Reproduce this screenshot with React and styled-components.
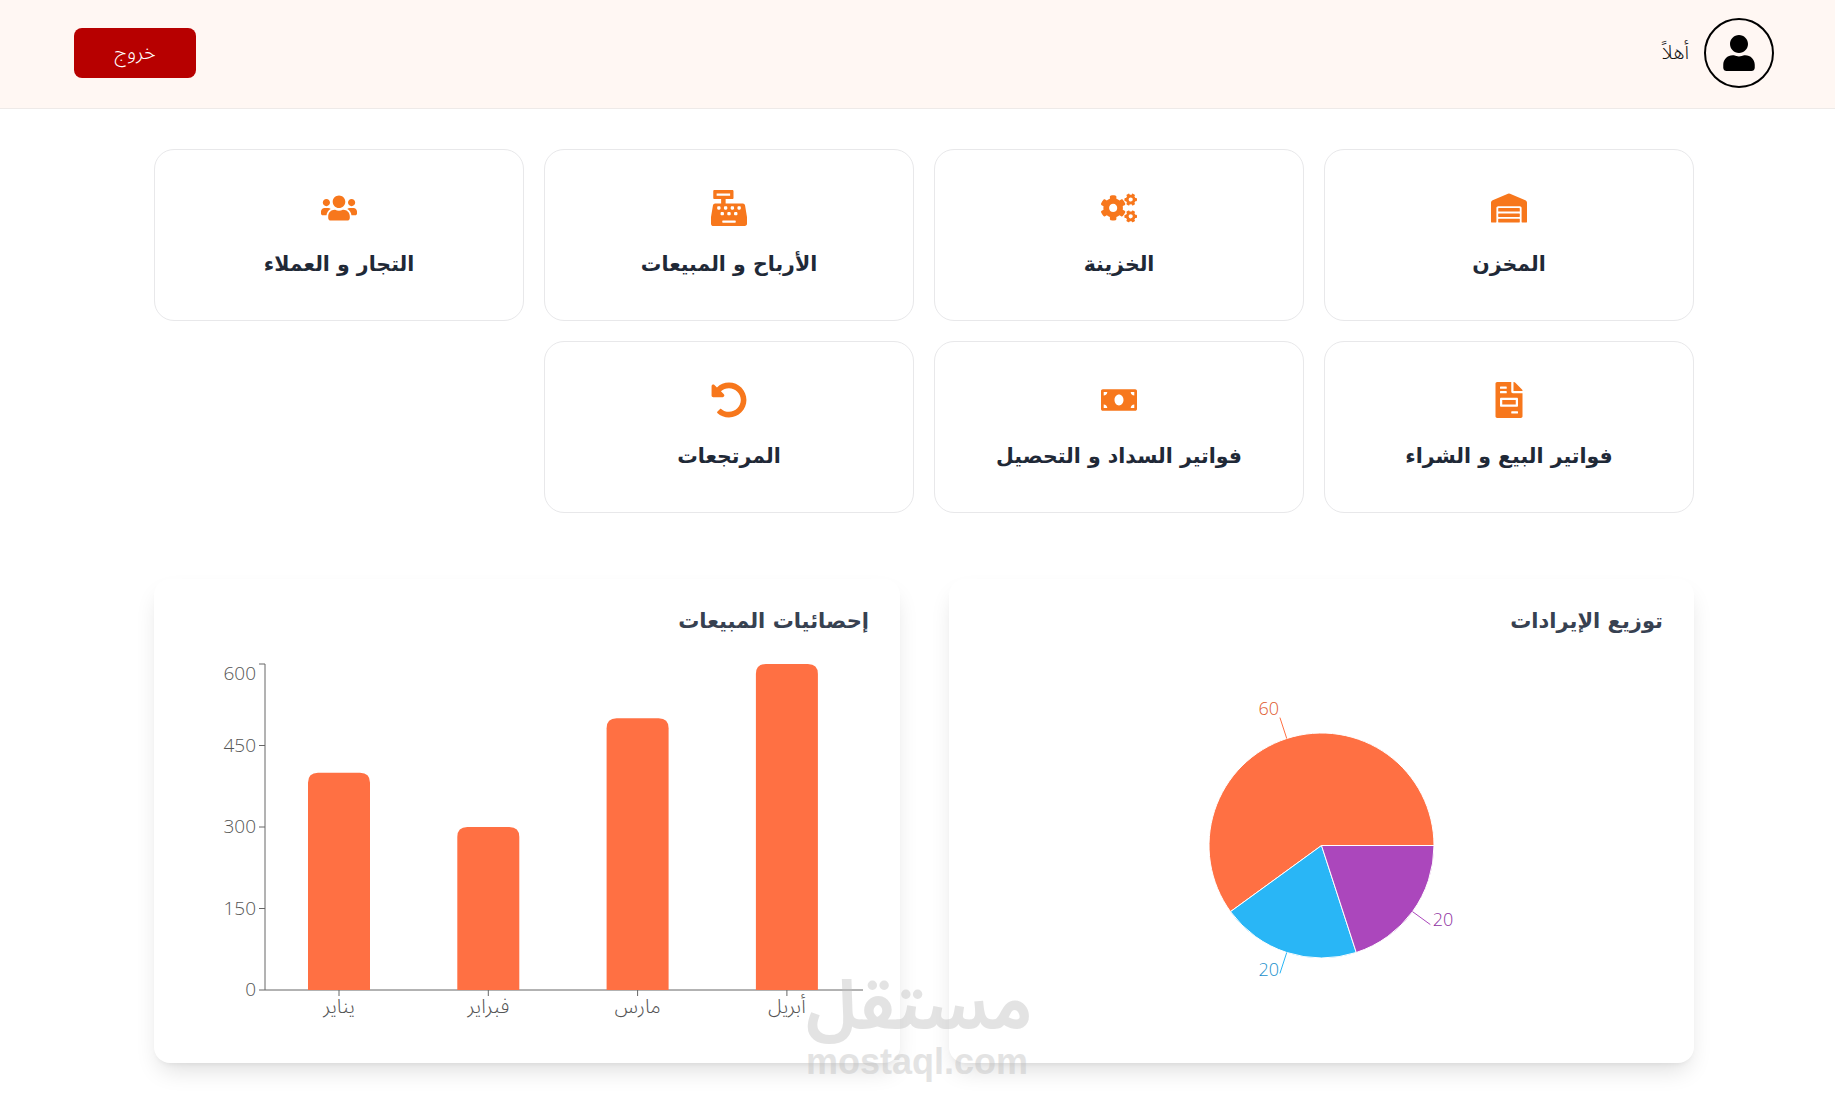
import React from "react";
import styled, { createGlobalStyle } from "styled-components";
import {
  FaWarehouse,
  FaCogs,
  FaCashRegister,
  FaUsers,
  FaFileInvoice,
  FaMoneyBill,
  FaUndoAlt,
  FaUser,
} from "react-icons/fa";

const arabicFont = `"Noto Sans Arabic", "Noto Sans", "DejaVu Sans", sans-serif`;
const headingFont = `"DejaVu Sans", sans-serif`;

const GlobalStyle = createGlobalStyle`
  html, body {
    margin: 0;
    padding: 0;
    background: #fff;
    font-family: ${arabicFont};
  }
  * { box-sizing: border-box; }
`;

const Page = styled.div`
  position: relative;
  direction: rtl;
  height: 1103px;
  overflow: hidden;
`;

const Header = styled.header`
  height: 109px;
  display: flex;
  align-items: center;
  justify-content: space-between;
  padding: 0 61px 2px 74px;
  background: #fff7f3;
  border-bottom: 1px solid #eeeae8;
`;

const UserBox = styled.div`
  display: flex;
  align-items: center;
  gap: 15px;
`;

const Avatar = styled.div`
  width: 70px;
  height: 70px;
  border: 2px solid #000;
  border-radius: 50%;
  display: flex;
  align-items: center;
  justify-content: center;
  font-size: 36px;
  color: #000;
`;

const Greeting = styled.span`
  font-size: 20px;
  font-weight: 300;
  color: #111;
`;

const LogoutButton = styled.button`
  width: 122px;
  height: 50px;
  border: 0;
  border-radius: 8px;
  background: #b70000;
  color: #fff;
  font-family: inherit;
  font-size: 20px;
  font-weight: 300;
`;

const Main = styled.main`
  padding: 40px 141px 0 154px;
`;

const CardGrid = styled.div`
  display: grid;
  grid-template-columns: repeat(4, 1fr);
  gap: 20px;
`;

const Card = styled.div`
  height: 172px;
  padding-top: 40px;
  display: flex;
  flex-direction: column;
  align-items: center;
  gap: 26px;
  border: 1px solid #e8e8ea;
  border-radius: 20px;
  background: #fff;
`;

const CardIcon = styled.div`
  font-size: 36px;
  line-height: 0;
  color: #f7771c;
`;

const CardLabel = styled.div`
  font-family: ${headingFont};
  font-size: 20.5px;
  font-weight: 700;
  color: #1f2937;
`;

const ChartGrid = styled.div`
  display: grid;
  grid-template-columns: 745px 746px;
  gap: 49px;
  margin-top: 66px;
`;

const Panel = styled.section`
  height: 484px;
  padding: 22px 31px 0;
  background: #fff;
  border-radius: 16px;
  box-shadow: 0 12px 24px -6px rgba(0, 0, 0, 0.14), 0 4px 6px -4px rgba(0, 0, 0, 0.08);
`;

const PanelTitle = styled.h2`
  height: 49px;
  margin: 0;
  padding-top: 8px;
  font-family: ${headingFont};
  font-size: 21px;
  font-weight: 700;
  color: #374151;
`;

const ChartSvg = styled.svg`
  display: block;
  direction: ltr;
  font-family: "Open Sans", ${arabicFont};
  font-weight: 300;
`;

const Watermark = styled.div`
  position: absolute;
  left: 806px;
  top: 972px;
  width: 221px;
  direction: ltr;
  text-align: center;
  color: #bebebe;
  opacity: 0.42;
  pointer-events: none;
`;

const WatermarkArabic = styled.div`
  font-size: 68px;
  line-height: 72px;
  font-weight: 700;
`;

const WatermarkLatin = styled.div`
  font-family: "Liberation Sans", sans-serif;
  font-size: 36px;
  line-height: 36px;
  font-weight: 700;
`;

const cards = [
  { label: "المخزن", icon: <FaWarehouse /> },
  { label: "الخزينة", icon: <FaCogs /> },
  { label: "الأرباح و المبيعات", icon: <FaCashRegister /> },
  { label: "التجار و العملاء", icon: <FaUsers /> },
  { label: "فواتير البيع و الشراء", icon: <FaFileInvoice /> },
  { label: "فواتير السداد و التحصيل", icon: <FaMoneyBill /> },
  { label: "المرتجعات", icon: <FaUndoAlt /> },
];

const bars = [
  { name: "يناير", value: 400 },
  { name: "فبراير", value: 300 },
  { name: "مارس", value: 500 },
  { name: "أبريل", value: 600 },
];

const slices = [
  { value: 60, color: "#ff7043", text: "#e0592c" },
  { value: 20, color: "#29b6f6", text: "#1a8fcc" },
  { value: 20, color: "#ab47bc", text: "#8f33a2" },
];

const AXIS = "#666";
const TICK_TEXT = "#555";
const BASE_Y = 340;
const AXIS_X = 79;
const SCALE = 326 / 600;

const BarChart = () => (
  <ChartSvg width="683" height="400" viewBox="0 0 683 400">
    <line x1={AXIS_X} y1={14} x2={AXIS_X} y2={BASE_Y} stroke={AXIS} />
    <line x1={AXIS_X} y1={BASE_Y} x2={677} y2={BASE_Y} stroke={AXIS} />
    {[0, 150, 300, 450, 600].map((tick) => {
      const y = BASE_Y - tick * SCALE;
      return (
        <g key={tick}>
          <line x1={AXIS_X - 6} y1={y} x2={AXIS_X} y2={y} stroke={AXIS} />
          <text
            x={AXIS_X - 9}
            y={tick === 600 ? y + 16 : y + 6}
            textAnchor="end"
            fontSize="19"
            fill={TICK_TEXT}
          >
            {tick}
          </text>
        </g>
      );
    })}
    {bars.map((bar, i) => {
      const cx = AXIS_X + 74 + i * 149.3;
      const top = BASE_Y - bar.value * SCALE;
      return (
        <g key={bar.name}>
          <path
            d={`M${cx - 31} ${BASE_Y} V${top + 10} Q${cx - 31} ${top} ${cx - 21} ${top} H${cx + 21} Q${cx + 31} ${top} ${cx + 31} ${top + 10} V${BASE_Y} Z`}
            fill="#ff7043"
          />
          <line x1={cx} y1={BASE_Y} x2={cx} y2={BASE_Y + 6} stroke={AXIS} />
          <text x={cx} y={BASE_Y + 23} textAnchor="middle" fontSize="20" fill={TICK_TEXT}>
            {bar.name}
          </text>
        </g>
      );
    })}
  </ChartSvg>
);

const polar = (cx, cy, r, deg) => {
  const rad = (deg * Math.PI) / 180;
  return [cx + r * Math.cos(rad), cy - r * Math.sin(rad)];
};

const PieChart = () => {
  const cx = 341.5;
  const cy = 195.5;
  const r = 112.5;
  let start = 0;
  return (
    <ChartSvg width="683" height="400" viewBox="0 0 683 400">
      {slices.map((slice, i) => {
        const sweep = (slice.value / 100) * 360;
        const end = start + sweep;
        const mid = start + sweep / 2;
        const [x1, y1] = polar(cx, cy, r, start);
        const [x2, y2] = polar(cx, cy, r, end);
        const [lx1, ly1] = polar(cx, cy, r, mid);
        const [lx2, ly2] = polar(cx, cy, r + 22, mid);
        const [tx, ty] = polar(cx, cy, r + 25, mid);
        start = end;
        return (
          <g key={i}>
            <path
              d={`M${cx} ${cy} L${x1} ${y1} A${r} ${r} 0 ${sweep > 180 ? 1 : 0} 0 ${x2} ${y2} Z`}
              fill={slice.color}
              stroke="#fff"
            />
            <line x1={lx1} y1={ly1} x2={lx2} y2={ly2} stroke={slice.color} />
            <text
              x={tx}
              y={ty}
              textAnchor={tx > cx ? "start" : "end"}
              fontSize="18"
              fill={slice.text}
            >
              {slice.value}
            </text>
          </g>
        );
      })}
    </ChartSvg>
  );
};

const App = () => (
  <Page>
    <GlobalStyle />
    <Header>
      <UserBox>
        <Avatar>
          <FaUser />
        </Avatar>
        <Greeting>أهلاً</Greeting>
      </UserBox>
      <LogoutButton>خروج</LogoutButton>
    </Header>
    <Main>
      <CardGrid>
        {cards.map((card) => (
          <Card key={card.label}>
            <CardIcon>{card.icon}</CardIcon>
            <CardLabel>{card.label}</CardLabel>
          </Card>
        ))}
      </CardGrid>
      <ChartGrid>
        <Panel>
          <PanelTitle>توزيع الإيرادات</PanelTitle>
          <PieChart />
        </Panel>
        <Panel>
          <PanelTitle>إحصائيات المبيعات</PanelTitle>
          <BarChart />
        </Panel>
      </ChartGrid>
    </Main>
    <Watermark>
      <WatermarkArabic>مستقل</WatermarkArabic>
      <WatermarkLatin>mostaql.com</WatermarkLatin>
    </Watermark>
  </Page>
);

export default App;
